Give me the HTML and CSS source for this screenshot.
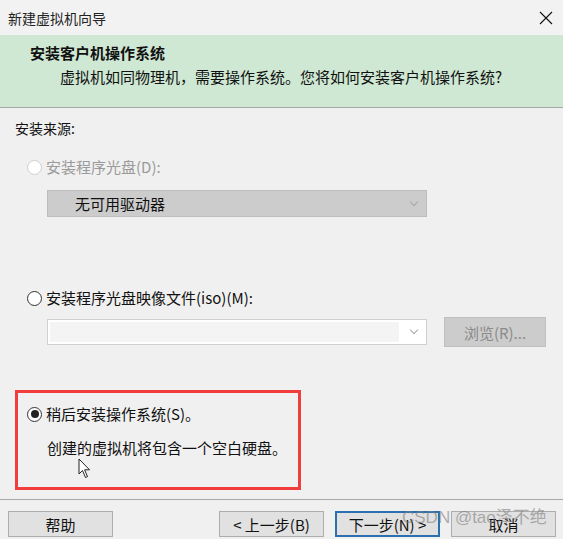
FILE: index.html
```html
<!DOCTYPE html>
<html lang="zh-CN">
<head>
<meta charset="utf-8">
<title>新建虚拟机向导</title>
<link rel="stylesheet" href="styles.css">
</head>
<body>
<div class="window">
  <div class="titlebar">
    <span class="title">新建虚拟机向导</span>
    <svg class="close" width="14" height="14" viewBox="0 0 14 14"><path d="M1 1 L13 13 M13 1 L1 13" stroke="#111" stroke-width="1.1" fill="none"/></svg>
  </div>
  <div class="header">
    <div class="h-title">安装客户机操作系统</div>
    <div class="h-sub">虚拟机如同物理机，需要操作系统。您将如何安装客户机操作系统?</div>
  </div>
  <div class="body">
    <div class="section-label">安装来源:</div>
    <div class="radio-row disabled row1"><span class="radio"></span><span>安装程序光盘(D):</span></div>
    <div class="select disabled-select sel1"><span class="sel-text">无可用驱动器</span><span class="chev"></span></div>
    <div class="radio-row row2"><span class="radio"></span><span>安装程序光盘映像文件(iso)(M):</span></div>
    <div class="iso-row">
      <div class="select iso-select"><span class="iso-inner"></span><span class="chev"></span></div>
      <div class="browse">浏览(R)...</div>
    </div>
    <div class="later-box">
      <div class="radio-row"><span class="radio checked"></span><span>稍后安装操作系统(S)。</span></div>
      <div class="desc">创建的虚拟机将包含一个空白硬盘。</div>
    </div>
    <div class="separator"></div>
    <div class="buttons">
      <div class="btn help">帮助</div>
      <div class="btn-group">
        <div class="btn">&lt; 上一步(B)</div>
        <div class="btn primary">下一步(N) &gt;</div>
        <div class="btn">取消</div>
      </div>
    </div>
  </div>
  <svg class="cursor" width="14" height="21" viewBox="0 0 14 21"><path d="M1 1 L1 16 L4.5 12.5 L7.5 19.5 L9.5 18.6 L6.6 11.8 L11.5 11.8 Z" fill="#fff" stroke="#222" stroke-width="1" stroke-linejoin="round"/></svg>
  <div class="watermark">CSDN @tao泽不绝</div>
</div>
</body>
</html>
```
FILE: styles.css
```css
* { box-sizing: border-box; }
html, body { margin: 0; padding: 0; }
body {
  width: 563px;
  height: 539px;
  overflow: hidden;
  background: #f0f0f0;
  font-family: "Noto Sans CJK SC", "Noto Sans", sans-serif;
  color: #111;
}
.window { position: relative; width: 563px; height: 539px; }
.titlebar {
  height: 35px;
  background: #f2f2f2;
  display: flex;
  align-items: center;
  justify-content: space-between;
  padding: 0 10px 0 8px;
}
.title { font-size: 14px; line-height: 20px; color: #222; }
.close { display: block; }
.header {
  height: 73px;
  background: #cfe8d3;
  border-bottom: 1px solid #a8a8a8;
  padding: 8px 0 0 30px;
}
.h-title { font-size: 15px; font-weight: bold; line-height: 20px; }
.h-sub { font-size: 15px; line-height: 20px; margin-top: 4px; padding-left: 30px; }
.body { display: flex; flex-direction: column; }
.section-label { font-size: 14px; line-height: 20px; margin: 10px 0 0 15px; }
.radio-row {
  display: flex;
  align-items: center;
  gap: 4px;
  font-size: 15px;
  line-height: 20px;
  padding-left: 27px;
}
.radio-row.disabled { color: #9a9a9a; }
.row1 { margin-top: 19px; }
.row2 { margin-top: 71px; }
.radio {
  width: 15px; height: 15px;
  border-radius: 50%;
  border: 1px solid #333;
  background: #fff;
  flex: none;
  position: relative;
}
.disabled .radio { border-color: #cfcfcf; }
.radio.checked::after {
  content: "";
  position: absolute;
  left: 2.5px; top: 2.5px;
  width: 8px; height: 8px;
  border-radius: 50%;
  background: #222;
}
.select {
  width: 380px;
  margin-left: 47px;
  display: flex;
  align-items: center;
  justify-content: space-between;
}
.disabled-select {
  height: 27px;
  margin-top: 13px;
  background: #cccccc;
  border: 1px solid #bdbdbd;
  padding: 0 8px 0 27px;
  font-size: 15px;
}
.chev {
  width: 6px; height: 6px;
  border-right: 1px solid #a8a8a8;
  border-bottom: 1px solid #a8a8a8;
  transform: rotate(45deg);
  margin-top: -4px;
  margin-right: 1px;
  flex: none;
}
.iso-row {
  display: flex;
  align-items: center;
  margin-top: 9px;
  height: 30px;
}
.iso-select {
  height: 26px;
  background: #fff;
  border: 1px solid #d0d0d0;
  padding: 2px 8px 2px 2px;
}
.iso-inner { flex: 1; height: 100%; background: #f4f4f4; margin-right: 12px; }
.browse {
  margin-left: 17px;
  width: 102px;
  height: 30px;
  background: #cccccc;
  border: 1px solid #bfbfbf;
  color: #8a8a8a;
  font-size: 15px;
  display: flex;
  align-items: center;
  justify-content: center;
}
.later-box {
  margin: 43px 0 0 15px;
  width: 286px;
  height: 100px;
  border: 3px solid #f23d3d;
  padding-top: 11px;
}
.later-box .radio-row { padding-left: 9px; }
.desc { font-size: 15px; line-height: 20px; margin: 14px 0 0 29px; }
.separator { height: 1px; background: #a8a8a8; margin-top: 9px; }
.buttons {
  display: flex;
  justify-content: space-between;
  margin-top: 11px;
  padding: 0 7px 0 8px;
}
.btn-group { display: flex; gap: 11px; }
.btn {
  width: 105px;
  height: 26px;
  background: #e1e1e1;
  border: 1px solid #adadad;
  font-size: 15px;
  display: flex;
  align-items: center;
  justify-content: center;
}
.btn.primary { border: 2px solid #2a6fb0; }
.cursor { position: absolute; left: 78px; top: 458px; }
.watermark {
  position: absolute;
  left: 402px;
  top: 506px;
  font-size: 17px;
  line-height: 24px;
  color: rgba(125, 125, 125, 0.6);
  font-family: "Liberation Sans", "Noto Sans CJK SC", sans-serif;
  white-space: nowrap;
}
```
